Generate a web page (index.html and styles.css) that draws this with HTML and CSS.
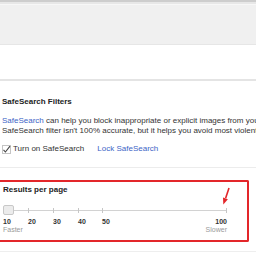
FILE: index.html
```html
<!doctype html>
<html>
  <head>
    <meta charset="utf-8" />
    <link rel="stylesheet" href="styles.css">
  </head>
  <body>
    <div class="chrome"></div>
    <div class="blank"></div>

    <div class="filters">
      <h3 class="title">SafeSearch Filters</h3>
      <p class="desc">
        <span class="line"><a href="#" class="link">SafeSearch</a> can help you block inappropriate or explicit images from your</span>
        <span class="line">SafeSearch filter isn't 100% accurate, but it helps you avoid most violent</span>
      </p>
      <div class="check-row">
        <span class="checkbox">
          <svg width="9" height="9" viewBox="0 0 9 9">
            <rect x="0.5" y="0.5" width="8" height="8" fill="#fff" stroke="#c4c4c4"/>
            <path d="M1.5 4.8 L3.4 7 L8 1.2" fill="none" stroke="#444" stroke-width="1.1"/>
          </svg>
        </span>
        <span class="check-label">Turn on SafeSearch</span>
        <a href="#" class="link lock">Lock SafeSearch</a>
      </div>
    </div>

    <div class="results">
      <h3 class="title">Results per page</h3>
      <div class="slider">
        <div class="track"></div>
        <span class="tick" style="left: 25px"></span>
        <span class="tick" style="left: 50px"></span>
        <span class="tick" style="left: 75px"></span>
        <span class="tick" style="left: 99px"></span>
        <span class="tick" style="left: 223px"></span>
        <div class="knob"></div>
      </div>
      <div class="nums">
        <span>10</span><span>20</span><span>30</span><span>40</span><span>50</span><span class="last">100</span>
      </div>
      <div class="hints">
        <span>Faster</span><span>Slower</span>
      </div>
      <svg class="arrow" width="16" height="22" viewBox="0 0 16 22">
        <path d="M11 2 L7.6 12.2" stroke="#e3262a" stroke-width="1.6" fill="none"/>
        <polygon points="5.3,18.5 9.9,13.2 5.0,11.4" fill="#e3262a"/>
      </svg>
    </div>
    <div class="after"></div>
  </body>
</html>
```

FILE: styles.css
```css
body {
  margin: 0;
  width: 256px;
  height: 256px;
  overflow: hidden;
  background: #fff;
  font-family: "Liberation Sans", Arial, sans-serif;
  color: #222;
}
.chrome {
  height: 42px;
  border-top: 2px solid #cdcdcd;
  border-bottom: 1px solid #e6e6e6;
  background: #f0f0f0;
  box-shadow: inset 0 2px 0 #e7e7e7, inset 0 3px 0 #f7f7f7;
}
.blank {
  height: 34px;
  border-bottom: 2px solid #e4e4e4;
}
.filters {
  padding: 16px 0 0 2px;
  border-bottom: 1px solid #ececec;
  padding-bottom: 13px;
}
.title {
  margin: 0;
  font-size: 8px;
  line-height: 10px;
  font-weight: bold;
  color: #222;
}
.desc {
  margin: 9px 0 0 0;
  font-size: 8px;
  line-height: 10px;
  color: #333;
}
.line {
  display: block;
  white-space: nowrap;
}
.link {
  color: #3d64c6;
  text-decoration: none;
}
.check-row {
  display: flex;
  align-items: center;
  margin-top: 8px;
  font-size: 8px;
  line-height: 10px;
  color: #333;
}
.checkbox {
  display: flex;
  margin-right: 2px;
}
.lock {
  margin-left: 13px;
}
.results {
  position: relative;
  margin: 12px 7px 0 -2px;
  border: 2px solid #e3262a;
  border-left-color: transparent;
  border-radius: 2px;
  padding: 3px 0 6px 3px;
}
.slider {
  position: relative;
  width: 224px;
  height: 10px;
  margin-top: 10px;
}
.track {
  position: absolute;
  left: 10px;
  right: 0;
  top: 5px;
  height: 1px;
  background: #d2d2d2;
}
.tick {
  position: absolute;
  top: 3px;
  width: 1px;
  height: 5px;
  background: #c6c6c6;
}
.knob {
  position: absolute;
  left: 0;
  top: 0;
  width: 9px;
  height: 8px;
  border: 1px solid #c8c8c8;
  border-radius: 2px;
  background: #ececec;
}
.nums {
  display: grid;
  grid-template-columns: 25px 25px 25px 24px 1fr auto;
  width: 224px;
  margin-top: 3px;
  font-size: 7px;
  line-height: 8px;
  font-weight: bold;
  color: #333;
}
.hints {
  display: flex;
  justify-content: space-between;
  width: 224px;
  font-size: 7px;
  line-height: 8px;
  color: #9a9a9a;
}
.arrow {
  position: absolute;
  left: 218px;
  top: 4px;
}
.after {
  margin-top: 9px;
  border-top: 1px solid #eeeeee;
}
```
